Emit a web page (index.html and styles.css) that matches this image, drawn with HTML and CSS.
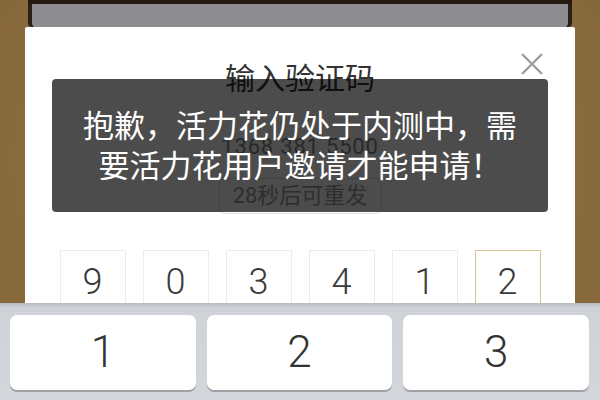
FILE: index.html
```html
<!DOCTYPE html>
<html lang="zh">
<head>
<meta charset="utf-8">
<link rel="stylesheet" href="styles.css">
</head>
<body>
<div class="backdrop"></div>
<div class="dialog">
  <div class="title">输入验证码</div>
  <svg class="close" width="22" height="22" viewBox="0 0 22 22"><path d="M1 1L21 21M21 1L1 21" stroke="#9a9a9a" stroke-width="2.2" fill="none"/></svg>
  <div class="phone">1368 381 5500</div>
  <div class="resend-row"><div class="resend">28秒后可重发</div></div>
  <div class="codes">
    <div class="box">9</div>
    <div class="box">0</div>
    <div class="box">3</div>
    <div class="box">4</div>
    <div class="box">1</div>
    <div class="box active">2</div>
  </div>
  <div class="toast">抱歉，活力花仍处于内测中，需<br>要活力花用户邀请才能申请！</div>
</div>
<div class="keyboard">
  <div class="key">1</div>
  <div class="key">2</div>
  <div class="key">3</div>
</div>
</body>
</html>
```

FILE: styles.css
```css
html, body {
  margin: 0;
  padding: 0;
}
body {
  width: 600px;
  height: 400px;
  overflow: hidden;
  background: radial-gradient(ellipse at 50% 40%, #8c7144 0%, #87693c 80%, #7a5e33 100%);
  font-family: "Noto Sans CJK SC", "Noto Sans", sans-serif;
}
.backdrop {
  height: 23px;
  margin: 0 28px;
  background: #8d8d91;
  border-top: 4px solid #241a12;
  box-shadow: inset 5px 0 0 -1px #2a2016, inset -5px 0 0 -1px #2a2016;
  border-radius: 0 0 4px 4px;
}
.dialog {
  position: relative;
  margin: 0 25px;
  height: 276px;
  background: #ffffff;
  overflow: hidden;
  text-align: center;
  border-radius: 2px 2px 0 0;
}
.title {
  padding-top: 31px;
  font-size: 30px;
  line-height: 36px;
  color: #333333;
}
.close {
  position: absolute;
  top: 26px;
  right: 32px;
}
.phone {
  margin-top: 40px;
  font-family: Roboto, "Noto Sans", sans-serif;
  font-size: 22px;
  line-height: 26px;
  letter-spacing: 0.8px;
  color: #8a8a8a;
}
.resend-row {
  display: flex;
  justify-content: center;
  margin-top: 18px;
}
.resend {
  box-sizing: border-box;
  width: 163px;
  height: 36px;
  border: 1px solid #dddddd;
  border-radius: 5px;
  font-size: 22px;
  line-height: 34px;
  color: #999999;
  font-family: Roboto, "Noto Sans CJK SC", sans-serif;
}
.codes {
  display: flex;
  justify-content: center;
  gap: 17px;
  margin-top: 36px;
}
.box {
  box-sizing: border-box;
  width: 66px;
  height: 64px;
  border: 1px solid #ececec;
  font-family: Roboto, sans-serif;
  font-weight: 300;
  font-size: 36px;
  line-height: 62px;
  color: #3a3a3a;
}
.box.active {
  border-color: #d8c592;
}
.toast {
  position: absolute;
  top: 52px;
  left: 27px;
  width: 496px;
  height: 133px;
  box-sizing: border-box;
  padding-top: 25px;
  background: rgba(0, 0, 0, 0.7);
  border-radius: 4px;
  color: #ffffff;
  font-size: 31px;
  line-height: 40px;
  text-align: center;
}
.keyboard {
  box-sizing: border-box;
  height: 97px;
  display: flex;
  gap: 11px;
  padding: 12px 11px 0 10px;
  background: linear-gradient(#b9bcc1 0px, #cfd2d7 5px, #d3d6db 100%);
}
.key {
  flex: 1;
  height: 75px;
  background: #ffffff;
  border-radius: 7px;
  box-shadow: 0 2px 0 #9ea1a6;
  text-align: center;
  font-family: Roboto, sans-serif;
  font-weight: 300;
  font-size: 44px;
  line-height: 75px;
  color: #333333;
}
```
